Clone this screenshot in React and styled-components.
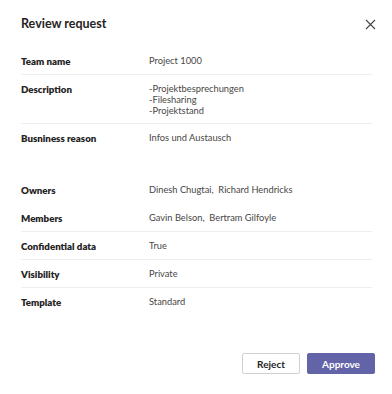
import React from 'react';
import styled, { createGlobalStyle } from 'styled-components';

const GlobalStyle = createGlobalStyle`
  html, body {
    margin: 0;
    padding: 0;
    background: #ffffff;
  }
  body {
    font-family: Lato, "Noto Sans", sans-serif;
  }
`;

const rows = [
  { label: 'Team name', value: ['Project 1000'], divider: true },
  {
    label: 'Description',
    value: ['-Projektbesprechungen', '-Filesharing', '-Projektstand'],
    divider: true,
  },
  { label: 'Busniness reason', value: ['Infos und Austausch'], extra: 24 },
  { label: 'Owners', value: ['Dinesh Chugtai,\u00a0 Richard Hendricks'] },
  { label: 'Members', value: ['Gavin Belson,\u00a0 Bertram Gilfoyle'], divider: true },
  { label: 'Confidential data', value: ['True'], divider: true },
  { label: 'Visibility', value: ['Private'], divider: true },
  { label: 'Template', value: ['Standard'] },
];

const App = () => {
  return (
    <>
      <GlobalStyle />
      <Dialog>
        <Header>
          <Title>Review request</Title>
          <CloseButton aria-label="Close">
            <svg width="11" height="11" viewBox="0 0 11 11">
              <path d="M1 1 L10 10 M10 1 L1 10" stroke="#444444" strokeWidth="1.1" fill="none" />
            </svg>
          </CloseButton>
        </Header>
        <Details>
          {rows.map(row => (
            <Row key={row.label} divider={row.divider} extra={row.extra || 0}>
              <Label>{row.label}</Label>
              <Value>
                {row.value.map(line => (
                  <Line key={line} multi={row.value.length > 1}>
                    {line}
                  </Line>
                ))}
              </Value>
            </Row>
          ))}
        </Details>
        <Footer>
          <Button>Reject</Button>
          <Button primary>Approve</Button>
        </Footer>
      </Dialog>
    </>
  );
};

export default App;

const Dialog = styled.div`
  width: 392px;
  height: 394px;
  box-sizing: border-box;
  padding: 0 17px 0 21px;
  display: flex;
  flex-direction: column;
  background: #ffffff;
`;

const Header = styled.div`
  display: flex;
  align-items: center;
  justify-content: space-between;
  padding-top: 16px;
  margin-bottom: 15px;
  height: 16px;
`;

const Title = styled.h1`
  margin: 0;
  font-size: 12.5px;
  line-height: 16px;
  font-weight: 700;
  color: #252423;
`;

const CloseButton = styled.button`
  border: none;
  background: none;
  padding: 0;
  margin-right: -1px;
  display: flex;
  cursor: pointer;
`;

const Details = styled.div`
  display: flex;
  flex-direction: column;
  margin-right: 3px;
`;

const Row = styled.div`
  display: grid;
  grid-template-columns: 128px 1fr;
  padding: 8px 0 ${p => 7 + p.extra}px;
  border-bottom: 1px solid ${p => (p.divider ? '#efefef' : 'transparent')};
`;

const Label = styled.div`
  font-size: 9.7px;
  line-height: 12px;
  font-weight: 800;
  color: #252423;
`;

const Value = styled.div`
  display: flex;
  flex-direction: column;
  font-size: 9.3px;
  color: #484644;
`;

const Line = styled.span`
  line-height: ${p => (p.multi ? '11px' : '12px')};
`;

const Footer = styled.div`
  margin-top: auto;
  margin-bottom: 20px;
  display: flex;
  justify-content: flex-end;
  gap: 7px;
`;

const Button = styled.button`
  height: 21px;
  min-width: ${p => (p.primary ? '68px' : '58px')};
  box-sizing: border-box;
  border-radius: 2px;
  border: 1px solid ${p => (p.primary ? '#6264a7' : '#d1d1d1')};
  background: ${p => (p.primary ? '#6264a7' : '#ffffff')};
  color: ${p => (p.primary ? '#ffffff' : '#252423')};
  font-family: Lato, "Noto Sans", sans-serif;
  font-size: 10px;
  font-weight: 700;
  padding: 0 12px;
  cursor: pointer;
`;
